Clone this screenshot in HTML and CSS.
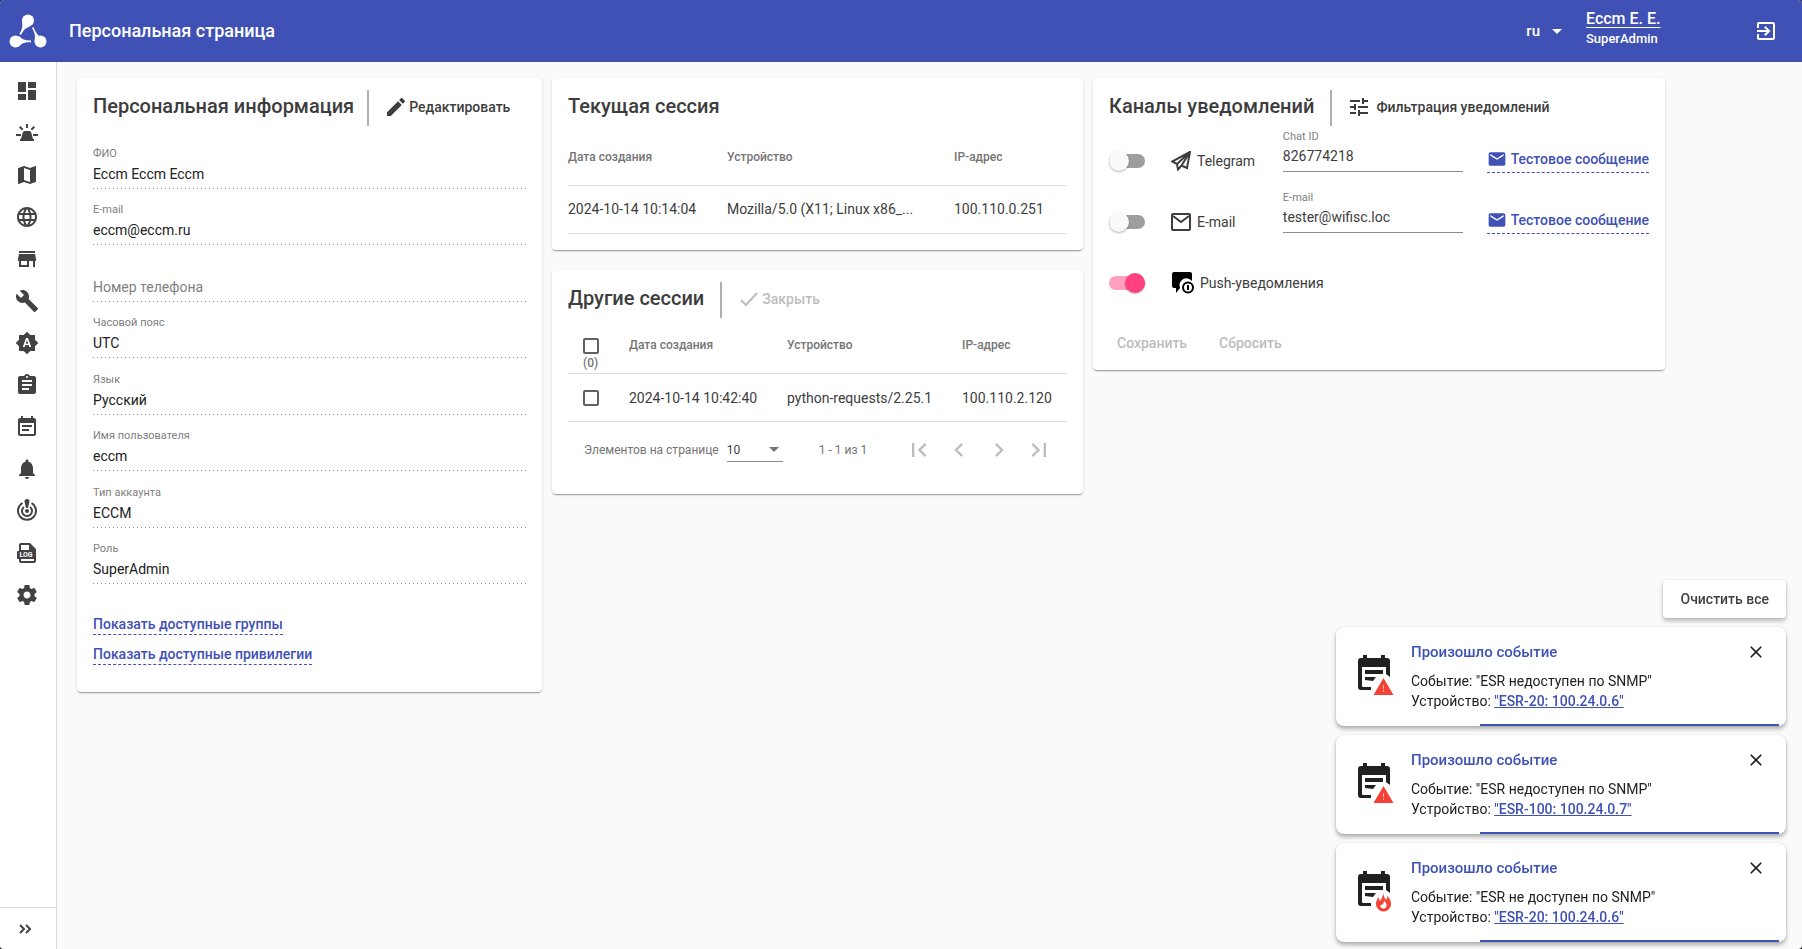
FILE: index.html
```html
<!DOCTYPE html>
<html lang="ru">
<head>
  <meta charset="UTF-8" />
  <meta name="viewport" content="width=device-width, initial-scale=1" />
  <title>Персональная страница</title>
  <link rel="stylesheet" href="styles.css">
</head>
<body>
  <!-- Shared icons -->
  <svg class="sprite" aria-hidden="true">
    <symbol id="i-mail" viewBox="0 0 24 24"><path d="M20 4H4c-1.100 0-1.990.9-1.990 2L2 18c0 1.100.9 2 2 2h16c1.100 0 2-.9 2-2V6c0-1.100-.9-2-2-2zm0 4l-8 5-8-5V6l8 5 8-5v2z"/></symbol>
    <symbol id="i-close" viewBox="0 0 24 24"><path d="M19 6.410L17.590 5 12 10.590 6.410 5 5 6.410 10.590 12 5 17.590 6.410 19 12 13.410 17.590 19 19 17.590 13.410 12z"/></symbol>
    <symbol id="i-event" viewBox="0 0 36 42">
      <path d="M5 1h4v3h14V1h4v3h2a3 3 0 0 1 3 3v16l-4-3v-7H4v19a1 1 0 0 0 1 1h8v3H3a3 3 0 0 1-3-3V7a3 3 0 0 1 3-3h2z"/>
      <path d="M7 16h18v4H7zM7 23h11l-3 4-8-1z"/>
    </symbol>
  </svg>

  <header class="topbar">
    <svg class="logo" viewBox="0 0 38 36">
      <circle cx="19" cy="7.500" r="6"/>
      <circle cx="6.500" cy="28.500" r="6"/>
      <circle cx="31.500" cy="28.500" r="6"/>
      <path d="M13 8.500c1 5 0 8-2.500 12.500l1.500 1c2-4 4-7 9-8.500zM9 34c4-4 7-5 13-4.800v-1.800c-6 .2-9-1-12-4.400zM37 26c-7-2-10-5-12.500-12l-1.500 1c3 5 3.500 8 2.500 13z"/>
    </svg>
    <h1>Персональная страница</h1>
    <button class="lang">ru <svg width="10" height="5" viewBox="0 0 10 5"><path d="M0 0h10L5 5z"/></svg></button>
    <div class="user">
      <a href="#">Eccm E. E.</a>
      <span>SuperAdmin</span>
    </div>
    <button class="logout" aria-label="Выйти"><svg viewBox="0 0 24 24"><path d="M10.090 15.590L11.500 17l5-5-5-5-1.410 1.410L12.670 11H3v2h9.670l-2.580 2.590zM19 3H5c-1.110 0-2 .9-2 2v4h2V5h14v14H5v-4H3v4c0 1.100.89 2 2 2h14c1.100 0 2-.9 2-2V5c0-1.100-.9-2-2-2z"/></svg></button>
  </header>

  <div class="layout">
    <nav class="sidebar">
      <ul>
        <li><a href="#" aria-label="Панель"><svg viewBox="0 0 24 24"><path d="M3 13h8V3H3v10zm0 8h8v-6H3v6zm10 0h8V11h-8v10zm0-18v6h8V3h-8z"/></svg></a></li>
        <li><a href="#" aria-label="Аварии"><svg viewBox="0 0 24 24"><path d="M11 3h2v4h-2zM4 6.400L5.400 5l3 3L7 9.400zM20 6.400L18.600 5l-3 3L17 9.400zM1 13h5v2H1zM18 13h5v2h-5zM10 10h4c1.200 0 2 .6 2.300 1.700L18 18h1v2H5v-2h1l1.700-6.300C8 10.600 8.800 10 10 10z"/></svg></a></li>
        <li><a href="#" aria-label="Карта"><svg viewBox="0 0 24 24"><path d="M20.500 3l-.16.030L15 5.100 9 3 3.360 4.900c-.21.070-.36.250-.36.480V20.500c0 .28.220.5.500.5l.16-.030L9 18.900l6 2.100 5.640-1.900c.21-.070.360-.25.360-.48V3.500c0-.28-.22-.5-.5-.5zM15 19l-6-2.110V5l6 2.110V19z"/></svg></a></li>
        <li><a href="#" aria-label="Сеть"><svg viewBox="0 0 24 24"><path d="M11.990 2C6.470 2 2 6.480 2 12s4.470 10 9.990 10C17.520 22 22 17.520 22 12S17.520 2 11.990 2zm6.930 6h-2.950c-.32-1.250-.78-2.450-1.380-3.560 1.840.63 3.370 1.910 4.330 3.560zM12 4.040c.83 1.200 1.480 2.530 1.910 3.960h-3.820c.43-1.430 1.080-2.760 1.910-3.960zM4.260 14C4.100 13.360 4 12.690 4 12s.1-1.360.26-2h3.380c-.08.66-.14 1.320-.14 2s.06 1.340.14 2H4.260zm.82 2h2.950c.32 1.250.78 2.450 1.380 3.560-1.840-.63-3.370-1.900-4.330-3.560zm2.950-8H5.080c.96-1.660 2.490-2.930 4.330-3.560C8.810 5.550 8.350 6.750 8.030 8zM12 19.960c-.83-1.200-1.480-2.530-1.910-3.960h3.820c-.43 1.430-1.080 2.760-1.910 3.960zM14.340 14H9.660c-.09-.66-.16-1.320-.16-2s.07-1.350.16-2h4.680c.09.650.16 1.320.16 2s-.07 1.340-.16 2zm.25 5.560c.6-1.110 1.060-2.310 1.380-3.560h2.950c-.96 1.650-2.490 2.930-4.330 3.560zM16.360 14c.08-.66.14-1.320.14-2s-.06-1.340-.14-2h3.380c.16.640.26 1.310.26 2s-.1 1.360-.26 2h-3.380z"/></svg></a></li>
        <li><a href="#" aria-label="Магазин"><svg viewBox="0 0 24 24"><path d="M20 4H4v2h16V4zm1 10v-2l-1-5H4l-1 5v2h1v6h10v-6h4v6h2v-6h1zm-9 4H6v-4h6v4z"/></svg></a></li>
        <li><a href="#" aria-label="Инструменты"><svg viewBox="0 0 24 24"><path d="M22.700 19l-9.100-9.100c.9-2.300.4-5-1.500-6.900-2-2-5-2.400-7.400-1.300L9 6 6 9 1.600 4.700C.4 7.100.9 10.100 2.900 12.100c1.900 1.900 4.600 2.400 6.900 1.500l9.100 9.100c.4.400 1 .4 1.400 0l2.300-2.300c.5-.4.5-1.100.1-1.400z"/></svg></a></li>
        <li><a href="#" aria-label="Автоматизация"><svg viewBox="0 0 24 24"><path d="M10.850 12.650h2.300L12 9l-1.150 3.650zM20 8.690V4h-4.690L12 .69 8.690 4H4v4.690L.69 12 4 15.310V20h4.690L12 23.310 15.310 20H20v-4.690L23.310 12 20 8.690zM14.300 16l-.7-2h-3.200l-.7 2H7.800L11 7h2l3.200 9h-1.900z"/></svg></a></li>
        <li><a href="#" aria-label="Задачи"><svg viewBox="0 0 24 24"><path d="M19 3h-4.180C14.400 1.840 13.300 1 12 1c-1.300 0-2.400.84-2.820 2H5c-1.100 0-2 .9-2 2v14c0 1.100.9 2 2 2h14c1.100 0 2-.9 2-2V5c0-1.100-.9-2-2-2zm-7 0c.55 0 1 .45 1 1s-.45 1-1 1-1-.45-1-1 .45-1 1-1zm2 14H7v-2h7v2zm3-4H7v-2h10v2zm0-4H7V7h10v2z"/></svg></a></li>
        <li><a href="#" aria-label="События"><svg viewBox="0 0 24 24"><path d="M17 10H7v2h10v-2zm2-7h-1V1h-2v2H8V1H6v2H5c-1.110 0-1.990.9-1.990 2L3 19c0 1.100.89 2 2 2h14c1.100 0 2-.9 2-2V5c0-1.100-.9-2-2-2zm0 16H5V8h14v11zm-5-5H7v2h7v-2z"/></svg></a></li>
        <li><a href="#" aria-label="Уведомления"><svg viewBox="0 0 24 24"><path d="M12 22c1.100 0 2-.9 2-2h-4c0 1.100.89 2 2 2zm6-6v-5c0-3.070-1.640-5.640-4.500-6.320V4c0-.83-.67-1.500-1.500-1.500s-1.500.67-1.500 1.500v.68C7.630 5.360 6 7.920 6 11v5l-2 2v1h16v-1l-2-2z"/></svg></a></li>
        <li><a href="#" aria-label="Мониторинг"><svg viewBox="0 0 24 24" class="stroke"><path d="M7.500 4a9 9 0 1 0 9 0M9 8a5 5 0 1 0 6 0"/><path class="solid" d="M12 0c1.700 0 2.500 1 2.500 2.500L13 9h-2L9.500 2.500C9.500 1 10.300 0 12 0z"/><circle class="solid" cx="12" cy="12" r="2"/></svg></a></li>
        <li><a href="#" aria-label="Журнал"><svg viewBox="0 0 24 24"><path fill-rule="evenodd" d="M6 2h9l6 6v12a2 2 0 0 1-2 2H6a2 2 0 0 1-2-2v-2H3a1 1 0 0 1-1-1v-6a1 1 0 0 1 1-1h1V4c0-1.100.9-2 2-2zm0 2v5h12.500L14 4zM6 18v2h13v-2z"/><path d="M14 3v6h6z"/><text x="11" y="16" text-anchor="middle">LOG</text></svg></a></li>
        <li><a href="#" aria-label="Настройки"><svg viewBox="0 0 24 24"><path d="M19.430 12.980c.04-.32.070-.64.070-.98s-.03-.66-.07-.98l2.110-1.650c.19-.15.240-.42.120-.64l-2-3.460c-.12-.22-.39-.3-.61-.22l-2.490 1c-.52-.4-1.080-.73-1.690-.98l-.38-2.650C14.460 2.180 14.250 2 14 2h-4c-.25 0-.46.180-.49.420l-.38 2.650c-.61.250-1.170.59-1.690.98l-2.490-1c-.23-.09-.49 0-.61.220l-2 3.460c-.13.220-.07.490.12.640l2.110 1.650c-.04.320-.07.650-.07.980s.03.660.07.980l-2.110 1.650c-.19.150-.24.420-.12.640l2 3.460c.12.220.39.300.61.220l2.490-1c.52.400 1.080.73 1.690.98l.38 2.650c.03.240.24.420.49.420h4c.25 0 .46-.18.490-.42l.38-2.650c.61-.25 1.170-.59 1.690-.98l2.490 1c.23.090.49 0 .61-.22l2-3.460c.12-.22.070-.49-.12-.64l-2.110-1.650zM12 15.500c-1.930 0-3.500-1.570-3.500-3.500s1.570-3.500 3.500-3.500 3.500 1.570 3.500 3.500-1.570 3.500-3.500 3.500z"/></svg></a></li>
      </ul>
      <button class="expand" aria-label="Развернуть меню"><svg width="12" height="10" viewBox="0 0 12 10"><path d="M1 1l4 4-4 4M7 1l4 4-4 4"/></svg></button>
    </nav>

    <main>
      <section class="card info">
        <div class="card-head">
          <h2>Персональная информация</h2>
          <button class="head-btn"><svg viewBox="3 3 18 18"><path d="M3 17.250V21h3.750L17.810 9.940l-3.750-3.750L3 17.250zM20.710 7.040c.39-.39.390-1.020 0-1.410l-2.340-2.340c-.39-.39-1.020-.39-1.410 0l-1.830 1.830 3.750 3.750 1.830-1.830z"/></svg>Редактировать</button>
        </div>
        <div class="fields">
          <div class="field"><label for="fio">ФИО</label><input id="fio" value="Eccm Eccm Eccm" readonly></div>
          <div class="field"><label for="mail">E-mail</label><input id="mail" value="eccm@eccm.ru" readonly></div>
          <div class="field"><input id="phone" placeholder="Номер телефона" aria-label="Номер телефона" readonly></div>
          <div class="field"><label for="tz">Часовой пояс</label><input id="tz" value="UTC" readonly></div>
          <div class="field"><label for="language">Язык</label><input id="language" value="Русский" readonly></div>
          <div class="field"><label for="login">Имя пользователя</label><input id="login" value="eccm" readonly></div>
          <div class="field"><label for="type">Тип аккаунта</label><input id="type" value="ECCM" readonly></div>
          <div class="field"><label for="role">Роль</label><input id="role" value="SuperAdmin" readonly></div>
        </div>
        <div class="links">
          <a href="#">Показать доступные группы</a>
          <a href="#">Показать доступные привилегии</a>
        </div>
      </section>

      <div class="column">
        <section class="card">
          <div class="card-head"><h2>Текущая сессия</h2></div>
          <table class="current">
            <thead>
              <tr><th class="date">Дата создания</th><th>Устройство</th><th class="ip">IP-адрес</th></tr>
            </thead>
            <tbody>
              <tr><td>2024-10-14 10:14:04</td><td>Mozilla/5.0 (X11; Linux x86_...</td><td>100.110.0.251</td></tr>
            </tbody>
          </table>
        </section>

        <section class="card others">
          <div class="card-head">
            <h2>Другие сессии</h2>
            <button class="head-btn" disabled><svg viewBox="0 0 18 14"><path d="M1 8l5 5L17 1" fill="none" stroke="currentColor" stroke-width="2"/></svg>Закрыть</button>
          </div>
          <table>
            <thead>
              <tr>
                <th class="pick"><input type="checkbox" aria-label="Выбрать все"><span>(0)</span></th>
                <th class="date">Дата создания</th><th>Устройство</th><th class="ip">IP-адрес</th>
              </tr>
            </thead>
            <tbody>
              <tr><td class="pick"><input type="checkbox" aria-label="Выбрать сессию"></td><td>2024-10-14 10:42:40</td><td>python-requests/2.25.1</td><td>100.110.2.120</td></tr>
            </tbody>
          </table>
          <div class="paginator">
            <label for="size">Элементов на странице</label>
            <div class="select">
              <select id="size"><option>10</option></select>
              <svg width="10" height="5" viewBox="0 0 10 5"><path d="M0 0h10L5 5z"/></svg>
            </div>
            <span class="range">1 - 1 из 1</span>
            <button disabled aria-label="Первая"><svg viewBox="0 0 24 24"><path d="M18.410 16.590L13.820 12l4.590-4.590L17 6l-6 6 6 6zM6 6h2v12H6z"/></svg></button>
            <button disabled aria-label="Предыдущая"><svg viewBox="0 0 24 24"><path d="M15.410 7.410L14 6l-6 6 6 6 1.410-1.410L10.830 12z"/></svg></button>
            <button disabled aria-label="Следующая"><svg viewBox="0 0 24 24"><path d="M10 6L8.590 7.410 13.170 12l-4.580 4.590L10 18l6-6z"/></svg></button>
            <button disabled aria-label="Последняя"><svg viewBox="0 0 24 24"><path d="M5.590 7.410L10.180 12l-4.590 4.590L7 18l6-6-6-6zM16 6h2v12h-2z"/></svg></button>
          </div>
        </section>
      </div>

      <section class="card">
        <div class="card-head">
          <h2>Каналы уведомлений</h2>
          <button class="head-btn filter"><svg viewBox="3 3 18 18"><path d="M3 17v2h6v-2H3zM3 5v2h10V5H3zm10 16v-2h8v-2h-8v-2h-2v6h2zM7 9v2H3v2h4v2h2V9H7zm14 4v-2H11v2h10zm-6-4h2V7h4V5h-4V3h-2v6z"/></svg>Фильтрация уведомлений</button>
        </div>
        <div class="channels">
          <div class="channel">
            <input type="checkbox" class="toggle" id="tg">
            <label for="tg" class="name"><svg viewBox="0 0 20 20" class="line"><path d="M19 1L1 10.500l5 2.500L19 1l-3 16-5.500-2.500L7 18.500 6 13M19 1l-8.500 13.500"/></svg>Telegram</label>
            <div class="field"><label for="chat">Chat ID</label><input id="chat" value="826774218"></div>
            <button class="test"><svg viewBox="0 0 24 24"><use href="#i-mail"/></svg>Тестовое сообщение</button>
          </div>
          <div class="channel">
            <input type="checkbox" class="toggle" id="em">
            <label for="em" class="name"><svg viewBox="0 0 20 20" class="line"><path d="M2 2h16a1 1 0 0 1 1 1v14a1 1 0 0 1-1 1H2a1 1 0 0 1-1-1V3a1 1 0 0 1 1-1zM2 4l8 6 8-6"/></svg>E-mail</label>
            <div class="field"><label for="addr">E-mail</label><input id="addr" value="tester@wifisc.loc"></div>
            <button class="test"><svg viewBox="0 0 24 24"><use href="#i-mail"/></svg>Тестовое сообщение</button>
          </div>
          <div class="channel">
            <input type="checkbox" class="toggle" id="push" checked>
            <label for="push" class="name push"><svg viewBox="0 0 22 22"><path d="M2 0h16a2 2 0 0 1 2 2v7a7 7 0 0 0-12 7l-4 5v-5H2a2 2 0 0 1-2-2V2a2 2 0 0 1 2-2z" fill="#000"/><circle cx="16" cy="15.500" r="5" fill="#fff" stroke="#000" stroke-width="2"/><path d="M15 13h2v5h-2z" fill="#000"/></svg>Push-уведомления</label>
          </div>
        </div>
        <div class="actions">
          <button disabled>Сохранить</button>
          <button disabled>Сбросить</button>
        </div>
      </section>
    </main>
  </div>

  <aside class="toasts">
    <button class="clear">Очистить все</button>
    <div class="toast">
      <svg class="toast-icon" viewBox="0 0 36 42"><use href="#i-event"/><path fill="#f44336" d="M25.500 24l10 17H15.500z"/><path fill="#fff" d="M25 31h1v4h-1zM25 36h1v2h-1z" opacity=".6"/></svg>
      <div class="toast-body">
        <h3>Произошло событие</h3>
        <p>Событие: "ESR недоступен по SNMP"</p>
        <p>Устройство: <a href="#">"ESR-20: 100.24.0.6"</a></p>
      </div>
      <button class="close" aria-label="Закрыть"><svg viewBox="0 0 24 24"><use href="#i-close"/></svg></button>
    </div>
    <div class="toast">
      <svg class="toast-icon" viewBox="0 0 36 42"><use href="#i-event"/><path fill="#f44336" d="M25.500 24l10 17H15.500z"/><path fill="#fff" d="M25 31h1v4h-1zM25 36h1v2h-1z" opacity=".6"/></svg>
      <div class="toast-body">
        <h3>Произошло событие</h3>
        <p>Событие: "ESR недоступен по SNMP"</p>
        <p>Устройство: <a href="#">"ESR-100: 100.24.0.7"</a></p>
      </div>
      <button class="close" aria-label="Закрыть"><svg viewBox="0 0 24 24"><use href="#i-close"/></svg></button>
    </div>
    <div class="toast">
      <svg class="toast-icon" viewBox="0 0 36 42"><use href="#i-event"/><path fill="#f44336" d="M26 23c-1 3 1 5 2 7 1-1 1-2 1-4 3 2 4 5 4 8a7.500 7.500 0 0 1-15 0c0-3 1-5 3-7 0 2 0 3 1 4 2-2 2-5 4-8z"/><path fill="#fff" d="M26 31c2 1 3 3 2.500 5a3 3 0 0 1-6-1c2 0 3-1 3.500-4z"/></svg>
      <div class="toast-body">
        <h3>Произошло событие</h3>
        <p>Событие: "ESR не доступен по SNMP"</p>
        <p>Устройство: <a href="#">"ESR-20: 100.24.0.6"</a></p>
      </div>
      <button class="close" aria-label="Закрыть"><svg viewBox="0 0 24 24"><use href="#i-close"/></svg></button>
    </div>
  </aside>
</body>
</html>
```
FILE: styles.css
```css
* {
  box-sizing: border-box;
}
html {
  background: #222;
}
body {
  margin: 0;
  min-height: 100vh;
  display: flex;
  flex-direction: column;
  overflow: clip;
  border-radius: 4px;
  font-family: Roboto, "Liberation Sans", sans-serif;
  font-size: 14px;
  color: #3d3d3d;
  background: #fafafa;
}
h1, h2, h3, p, ul {
  margin: 0;
  padding: 0;
}
button, input, select {
  font: inherit;
  color: inherit;
  margin: 0;
  padding: 0;
  border: 0;
  background: none;
}
button {
  cursor: pointer;
  font-weight: 500;
  white-space: nowrap;
}
button:disabled {
  color: #bdbdbd;
  cursor: default;
}
svg {
  fill: currentColor;
  flex: none;
}
.sprite {
  display: none;
}

/* top bar */
.topbar {
  display: flex;
  align-items: center;
  height: 62px;
  padding: 0 24px 0 9px;
  color: #fff;
  background: #3f51b5;
}
.logo {
  width: 38px;
  height: 36px;
  margin-right: 22px;
}
.topbar h1 {
  flex: 1;
  padding-bottom: 2px;
  font-size: 18px;
  font-weight: 500;
}
.lang {
  display: flex;
  align-items: center;
  gap: 12px;
  margin-right: 24px;
  font-size: 15px;
}
.user {
  display: flex;
  flex-direction: column;
  width: 168px;
  padding-bottom: 4px;
  font-size: 13px;
  font-weight: 500;
  line-height: 20px;
}
.user a {
  color: #fff;
  font-size: 16px;
  text-underline-offset: 3px;
}
.logout svg {
  display: block;
  width: 24px;
  height: 24px;
}

/* side menu */
.layout {
  flex: 1;
  display: flex;
}
.sidebar {
  display: flex;
  flex-direction: column;
  width: 57px;
  padding-top: 8px;
  background: #fff;
  border-right: 1px solid #dcdcdc;
}
.sidebar ul {
  flex: 1;
  list-style: none;
}
.sidebar a {
  display: flex;
  align-items: center;
  height: 42px;
  padding-left: 15px;
  color: #424242;
}
.sidebar a svg {
  width: 24px;
  height: 24px;
}
.sidebar text {
  fill: #fff;
  font-size: 7px;
  font-weight: 700;
}
.stroke {
  fill: none;
  stroke: currentColor;
  stroke-width: 2;
}
.solid {
  fill: currentColor;
  stroke: none;
}
.expand {
  height: 42px;
  padding-left: 19px;
  text-align: left;
  border-top: 1px solid #dcdcdc;
}
.expand svg {
  fill: none;
  stroke: #424242;
  stroke-width: 2;
}

/* cards */
main {
  flex: 1;
  display: grid;
  grid-template-columns: minmax(0, 465px) minmax(0, 531px) minmax(0, 572px);
  gap: 10px;
  align-items: start;
  padding: 16px 20px;
}
.column {
  display: grid;
  gap: 20px;
}
.card {
  padding: 12px 16px 16px;
  background: #fff;
  border-radius: 4px;
  box-shadow: 0 2px 1px -1px rgba(0,0,0,0.2), 0 1px 1px rgba(0,0,0,0.14), 0 1px 3px rgba(0,0,0,0.12);
}
.card-head {
  display: flex;
  height: 36px;
}
h2 {
  font-size: 20px;
  font-weight: 500;
  line-height: 32px;
}
.head-btn {
  display: flex;
  align-items: center;
  gap: 4px;
  margin-left: 16px;
  padding: 0 0 2px 18px;
  border-left: 2px solid #b0b0b0;
}
.info .head-btn {
  margin-left: 13px;
}
.head-btn svg {
  width: 18px;
  height: 18px;
}
.filter {
  gap: 8px;
}

/* form fields */
.fields {
  display: grid;
  grid-auto-rows: 1fr;
  min-height: 452px;
  margin-top: 6px;
  color: #212121;
}
.field {
  display: flex;
  flex-direction: column;
  justify-content: flex-end;
}
.field label {
  font-size: 11px;
  line-height: 14px;
  color: #808080;
}
.field input {
  width: 100%;
  height: 28px;
  padding-bottom: 2px;
  background: linear-gradient(to right, #8c8c8c 1px, transparent 1px) 0 100% / 4px 1px repeat-x;
  outline: none;
}
.field input::placeholder {
  color: #808080;
}
.links {
  display: flex;
  flex-direction: column;
  align-items: flex-start;
  gap: 10px;
  padding: 31px 0 11px;
}
.links a {
  line-height: 19px;
  font-weight: 500;
  color: #3f51b5;
  text-decoration: none;
  border-bottom: 1px dashed #3f51b5;
}

/* session tables */
table {
  width: 100%;
  table-layout: fixed;
  border-collapse: collapse;
}
.current {
  margin-top: 3px;
}
th, td {
  height: 48px;
  padding: 0;
  text-align: left;
  white-space: nowrap;
  border-bottom: 1px solid #e0e0e0;
}
th {
  height: 56px;
  font-size: 12px;
  font-weight: 500;
  color: #757575;
}
.date {
  width: 159px;
}
.ip {
  width: 113px;
}
.others .date {
  width: 158px;
}
.others .ip {
  width: 105px;
}
.pick {
  width: 61px;
  padding-left: 15px;
}
.pick input {
  display: block;
  appearance: none;
  width: 16px;
  height: 16px;
  border: 2px solid #616161;
  border-radius: 2px;
}
th.pick {
  vertical-align: bottom;
}
.pick span {
  display: block;
  line-height: 19px;
}
.paginator {
  display: flex;
  align-items: center;
  height: 56px;
  padding: 0 8px 0 16px;
  font-size: 12px;
  color: #757575;
}
.select {
  display: flex;
  align-items: center;
  width: 56px;
  height: 24px;
  margin: 0 36px 0 8px;
  padding-right: 4px;
  border-bottom: 1px solid #8c8c8c;
}
.select select {
  appearance: none;
  flex: 1;
  color: #3d3d3d;
}
.range {
  flex: 1;
}
.paginator button {
  width: 40px;
  height: 40px;
}
.paginator button svg {
  display: block;
  width: 28px;
  height: 28px;
  margin: auto;
}

/* notification channels */
.channels {
  margin-top: 4px;
}
.channel {
  display: flex;
  align-items: center;
  height: 61px;
}
.toggle {
  appearance: none;
  position: relative;
  width: 36px;
  height: 14px;
  margin-right: 26px;
  border-radius: 7px;
  background: #9e9e9e;
}
.toggle::before {
  content: "";
  position: absolute;
  top: -3px;
  left: 0;
  width: 20px;
  height: 20px;
  border-radius: 50%;
  background: #fafafa;
  box-shadow: 0 1px 2px rgba(0,0,0,0.3);
}
.toggle:checked {
  background: #ff9fbf;
}
.toggle:checked::before {
  left: 16px;
  background: #ff4081;
}
.name {
  display: flex;
  align-items: center;
  gap: 6px;
  width: 112px;
}
.name svg {
  width: 20px;
  height: 20px;
}
.push {
  width: auto;
  padding-left: 1px;
}
.push svg {
  width: 22px;
  height: 22px;
}
.line {
  fill: none;
  stroke: currentColor;
  stroke-width: 2;
}
.channel .field {
  width: 180px;
  margin-bottom: 20px;
}
.channel .field input {
  background: none;
  border-bottom: 1px solid #8c8c8c;
}
.test {
  display: flex;
  align-items: center;
  gap: 4px;
  height: 24px;
  margin-left: 24px;
  padding-bottom: 2px;
  color: #3f51b5;
  border-bottom: 1px dashed #3f51b5;
}
.test svg {
  width: 20px;
  height: 20px;
}
.actions {
  display: flex;
  gap: 32px;
  padding: 22px 8px 3px;
}

/* event toasts */
.toasts {
  position: fixed;
  right: 16px;
  bottom: 7px;
  display: flex;
  flex-direction: column;
  gap: 9px;
  width: 450px;
  color: #212121;
}
.clear {
  align-self: flex-end;
  height: 38px;
  padding: 0 17px;
  color: #424242;
  background: #fff;
  border-radius: 4px;
  box-shadow: 0 3px 4px rgba(0,0,0,0.25), 0 0 2px rgba(0,0,0,0.12);
}
.toast {
  display: flex;
  height: 99px;
  padding: 15px 20px 0 22px;
  background: linear-gradient(#3f51b5, #3f51b5) 144px 100% / 299px 2px no-repeat #fff;
  border-radius: 8px;
  box-shadow: 0 3px 4px rgba(0,0,0,0.3), 0 0 2px rgba(0,0,0,0.12);
}
.toast-icon {
  width: 36px;
  height: 42px;
  margin: 12px 17px 0 0;
}
.toast-body {
  flex: 1;
  line-height: 20px;
}
.toast h3 {
  margin-bottom: 9px;
  font-size: 15px;
  font-weight: 500;
  color: #3f51b5;
}
.toast a {
  font-weight: 500;
  color: #3f51b5;
}
.close {
  width: 20px;
  height: 20px;
}
.close svg {
  display: block;
  width: 20px;
  height: 20px;
}
```
